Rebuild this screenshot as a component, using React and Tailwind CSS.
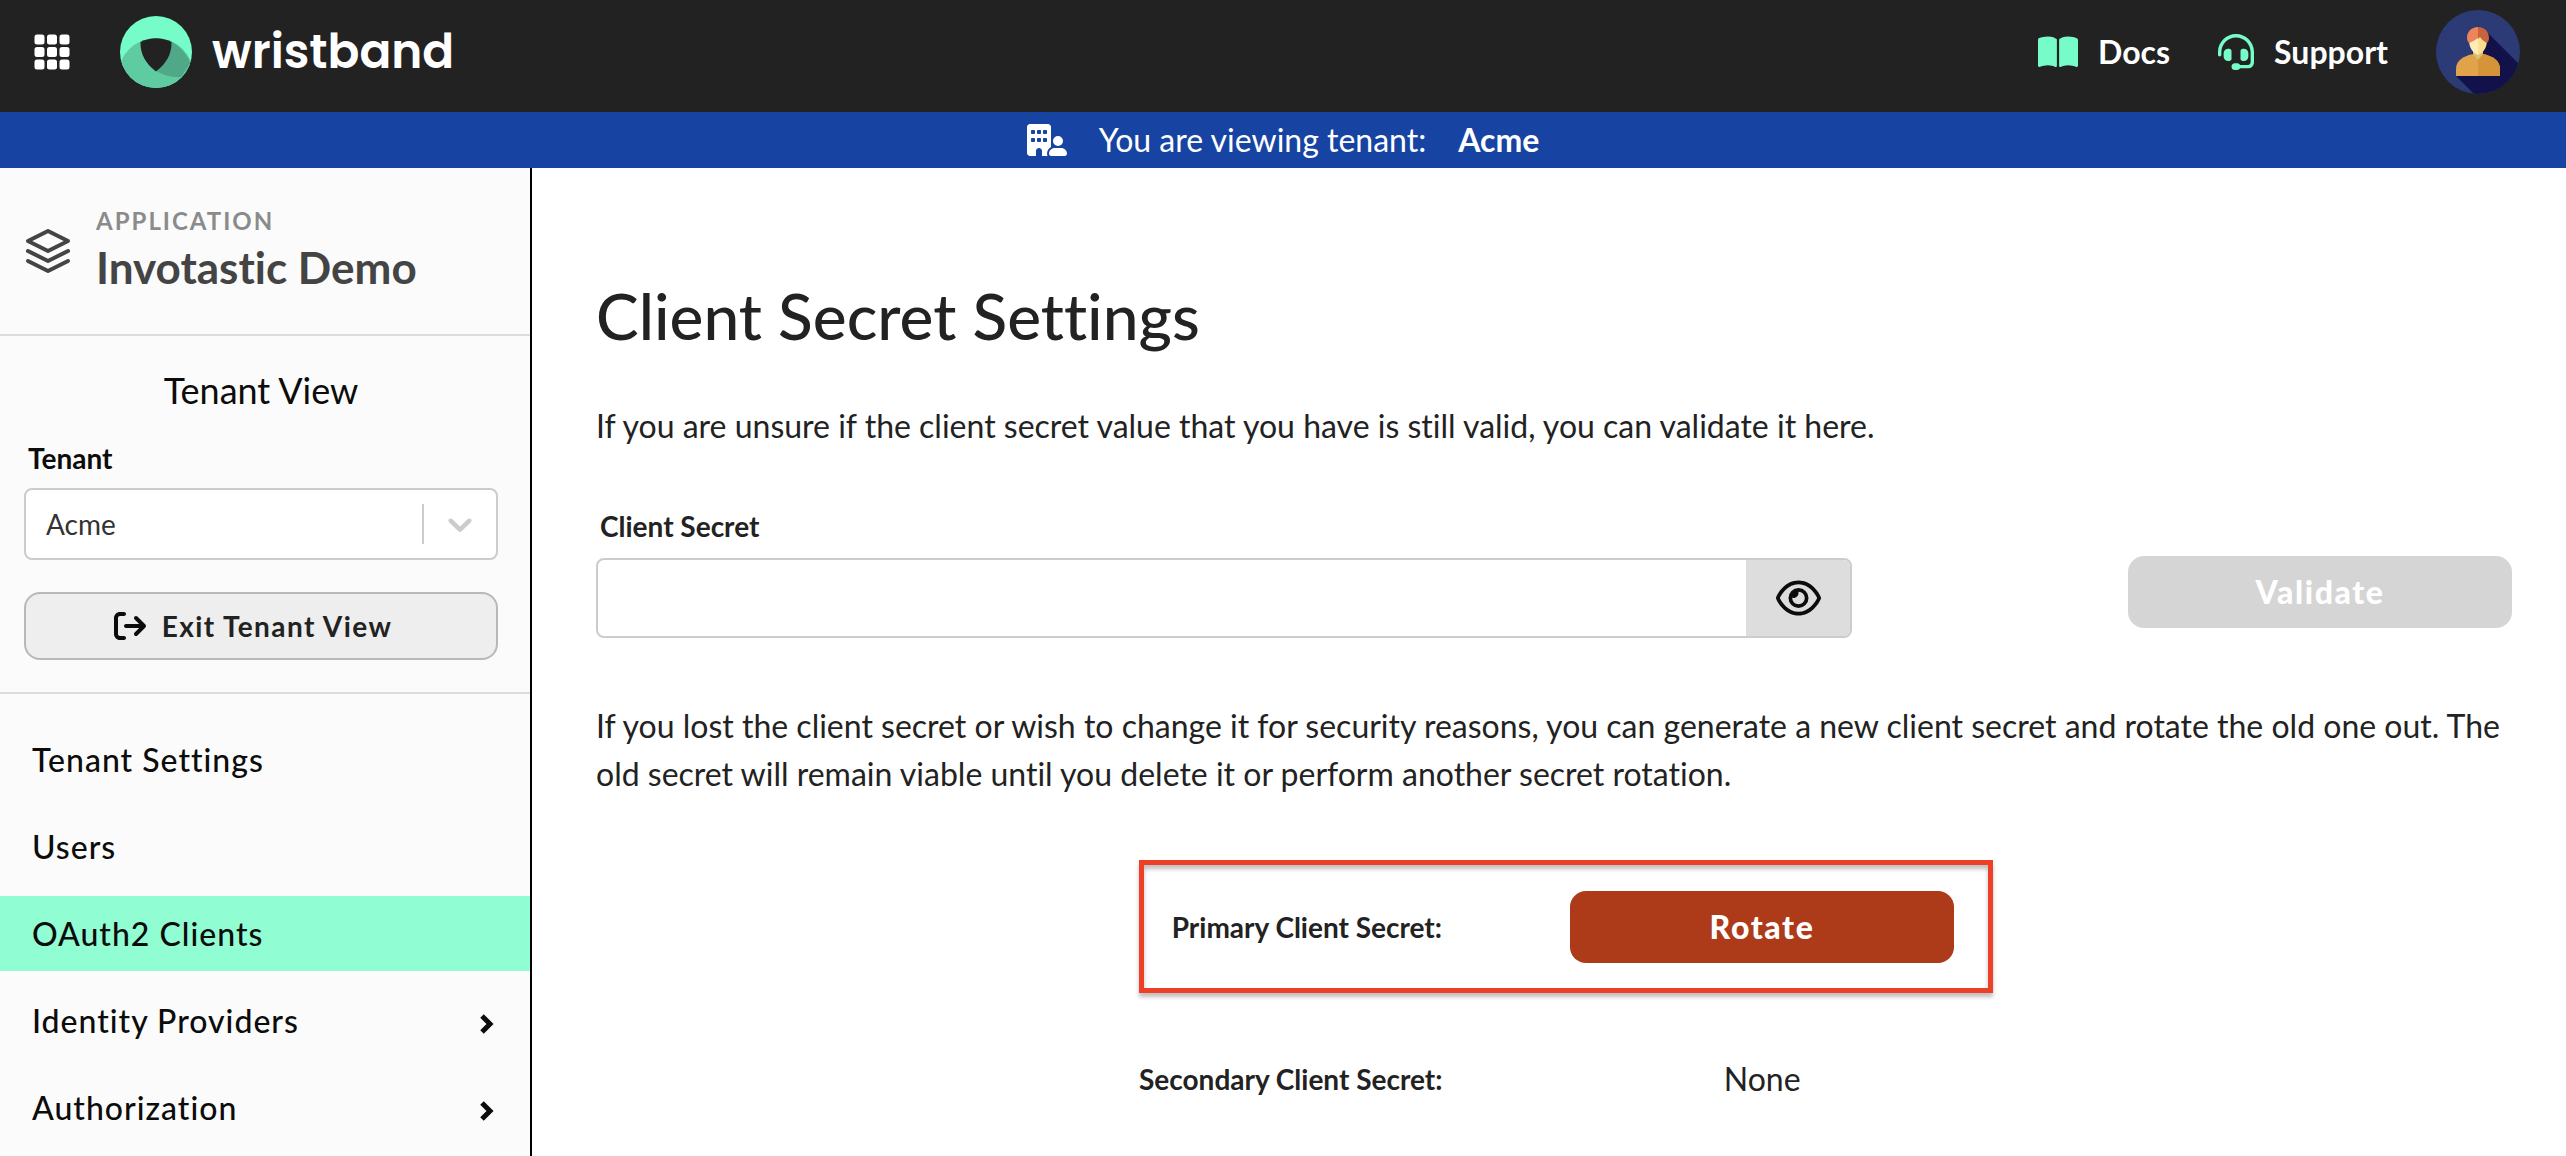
import React, { useState } from "react";
import {
  FaArrowRightFromBracket,
  FaBookOpen,
  FaBuildingUser,
  FaHeadset,
  FaRegEye,
} from "react-icons/fa6";
import { FiLayers } from "react-icons/fi";
import { BsGrid3X3GapFill } from "react-icons/bs";

function LogoMark() {
  return (
    <svg viewBox="0 0 72 72" className="size-18" aria-hidden="true">
      <defs>
        <clipPath id="logo-disc">
          <circle cx="36" cy="36" r="36" />
        </clipPath>
      </defs>
      <g clipPath="url(#logo-disc)">
        <rect width="72" height="72" fill="#75fcc8" />
        <circle cx="36" cy="60" r="38" fill="#5fcba1" />
        <path d="M51.500 25.500C59 29.500 66 37 70.500 47L61 61C51 61.500 43 59 36.500 55C46 48 52 38 51.500 25.500Z" fill="#4fa887" />
        <path d="M20.500 26C30.500 21 41.500 21 51.500 26C52 38 46 48 36 55.500C26 48 20 38 20.500 26Z" fill="#222222" />
      </g>
    </svg>
  );
}

function Avatar() {
  return (
    <svg viewBox="0 0 84 84" className="size-21" aria-hidden="true">
      <defs>
        <clipPath id="avatar-disc">
          <circle cx="42" cy="42" r="42" />
        </clipPath>
      </defs>
      <g clipPath="url(#avatar-disc)">
        <rect width="84" height="84" fill="#2c3b75" />
        <path d="M51 22L84 55V84H38L20 66Z" fill="#121149" />
        <path d="M20 66V59C20 50 28 46 37 44H47C56 46 64 50 64 59V66Z" fill="#e0a34a" />
        <path d="M42 44H47C56 46 64 50 64 59V66H42Z" fill="#d59438" />
        <path d="M37 38H47V44L42 50L37 44Z" fill="#ddc06d" />
        <path d="M33 30L42 24V45C37 43 33 38 33 30Z" fill="#fdebb9" />
        <path d="M42 24L51 30C51 38 47 43 42 45Z" fill="#fbdf8f" />
        <path d="M42 17C35 17 31 22 31 28C31 30 32 32 33 33C37 31 40 30 42 28Z" fill="#ee8459" />
        <path d="M42 17C49 17 53 22 53 28C53 30 52 32 51 33C48 31 46 30 44 27L42 29Z" fill="#c8633d" />
      </g>
    </svg>
  );
}

function SelectChevron() {
  return (
    <svg viewBox="0 0 20 20" className="size-10" fill="currentColor" aria-hidden="true">
      <path d="M4.516 7.548c0.436-0.446 1.043-0.481 1.576 0l3.908 3.747 3.908-3.747c0.533-0.481 1.141-0.446 1.574 0 0.436 0.445 0.408 1.197 0 1.615-0.406 0.418-4.695 4.502-4.695 4.502-0.217 0.223-0.502 0.335-0.787 0.335s-0.57-0.112-0.789-0.335c0 0-4.287-4.084-4.695-4.502s-0.436-1.17 0-1.615z" />
    </svg>
  );
}

function NavChevron() {
  return (
    <svg viewBox="0 0 14 20" className="mt-1.5 h-5 w-3.5" fill="none" aria-hidden="true">
      <path d="M2 2L10 10L2 18" stroke="currentColor" strokeWidth="5" />
    </svg>
  );
}

function TopBar() {
  return (
    <header className="flex h-28 items-center justify-between bg-[#222222] pr-[46px] pb-2 pl-8 text-white">
      <div className="flex items-center gap-12">
        <button type="button" aria-label="Applications">
          <BsGrid3X3GapFill className="size-10" />
        </button>
        <a href="#home" className="flex items-center gap-5">
          <LogoMark />
          <span className="font-[Poppins,Inter,sans-serif] text-[47px] font-semibold">wristband</span>
        </a>
      </div>
      <nav className="flex items-center gap-12 text-[32px] font-bold">
        <a href="#docs" className="flex items-center gap-5">
          <FaBookOpen className="h-9 w-10 text-[#75fcc8]" />
          Docs
        </a>
        <a href="#support" className="flex items-center gap-5">
          <FaHeadset className="size-9 text-[#75fcc8]" />
          Support
        </a>
        <button type="button" aria-label="Account">
          <Avatar />
        </button>
      </nav>
    </header>
  );
}

function TenantBanner() {
  return (
    <div className="flex h-14 items-center justify-center bg-[#1744a3] text-[32px] text-white">
      <FaBuildingUser className="mr-8 h-8 w-10" />
      <span className="mr-8">You are viewing tenant:</span>
      <strong>Acme</strong>
    </div>
  );
}

const navItems = [
  { label: "Tenant Settings" },
  { label: "Users" },
  { label: "OAuth2 Clients", active: true },
  { label: "Identity Providers", nested: true },
  { label: "Authorization", nested: true },
];

function Sidebar() {
  return (
    <aside className="w-[532px] shrink-0 border-r-2 border-black bg-[#fbfbfb] text-[#0c0c0c]">
      <div className="flex h-42 items-center gap-6 border-b-2 border-[#dcdcdc] px-6 text-[#444444]">
        <FiLayers className="size-12" />
        <div>
          <div className="text-2xl leading-8 font-bold tracking-[2px] text-[#8b8b8b]">APPLICATION</div>
          <div className="text-[44px] leading-15 font-bold">Invotastic Demo</div>
        </div>
      </div>

      <div className="border-b-2 border-[#dcdcdc] pt-[30px] pr-8 pb-8 pl-6">
        <h2 className="text-center text-4xl leading-12">Tenant View</h2>
        <label htmlFor="tenant" className="mt-6 ml-1 block text-[28px] leading-10 font-bold">
          Tenant
        </label>
        <div className="relative mt-[10px]">
          <select
            id="tenant"
            className="block h-18 w-full appearance-none rounded-lg border-2 border-[#cccccc] bg-white px-5 text-[28px] text-[#333333]"
          >
            <option>Acme</option>
          </select>
          <div className="pointer-events-none absolute inset-y-4 right-0.5 flex items-center border-l-2 border-[#cccccc] px-4 text-[#cccccc]">
            <SelectChevron />
          </div>
        </div>
        <button
          type="button"
          className="mt-8 flex h-17 w-full items-center justify-center gap-4 rounded-2xl border-2 border-[#b8b8b8] bg-[#eeeeee] pr-4 text-[28px] font-bold tracking-wider text-[#222222]"
        >
          <FaArrowRightFromBracket className="size-8 text-[#0c0c0c]" />
          Exit Tenant View
        </button>
      </div>

      <nav className="flex flex-col gap-3 pt-7">
        {navItems.map((item) => (
          <a
            key={item.label}
            href="#nav"
            aria-current={item.active ? "page" : undefined}
            className={
              item.active
                ? "flex h-[75px] items-center justify-between bg-[#90fdd3] pr-9 pl-8 text-[32px] font-medium tracking-[1px]"
                : "flex h-[75px] items-center justify-between pr-9 pl-8 text-[32px] font-medium tracking-[1px]"
            }
          >
            {item.label}
            {item.nested && <NavChevron />}
          </a>
        ))}
      </nav>
    </aside>
  );
}

function ClientSecretSettings() {
  const [secret, setSecret] = useState("");
  const [visible, setVisible] = useState(false);
  return (
    <main className="min-w-0 flex-1 bg-white pt-27 pr-[54px] pl-16 text-[#222222]">
      <h1 className="text-[64px] leading-20 font-medium">Client Secret Settings</h1>
      <p className="mt-[46px] text-[32px] leading-12">
        If you are unsure if the client secret value that you have is still valid, you can validate it here.
      </p>

      <form className="mt-14 flex items-end justify-between">
        <div className="w-[1256px]">
          <label htmlFor="client-secret" className="ml-1 block text-[28px] leading-10 font-bold">
            Client Secret
          </label>
          <div className="mt-3 flex h-20 overflow-hidden rounded-lg border-2 border-[#cccccc]">
            <input
              id="client-secret"
              type={visible ? "text" : "password"}
              value={secret}
              onChange={(event) => setSecret(event.target.value)}
              className="min-w-0 flex-1 px-5 text-[32px] outline-none"
            />
            <button
              type="button"
              aria-label="Show client secret"
              onClick={() => setVisible(!visible)}
              className="flex w-26 items-center justify-center bg-[#dddddd] text-[#0c0c0c]"
            >
              <FaRegEye className="h-10 w-[45px]" />
            </button>
          </div>
        </div>
        <button
          type="button"
          disabled
          className="mb-[10px] h-18 w-96 rounded-2xl bg-[#d5d5d5] text-[32px] font-black tracking-wider text-white"
        >
          Validate
        </button>
      </form>

      <p className="mt-16 text-[32px] leading-12">
        If you lost the client secret or wish to change it for security reasons, you can generate a new client secret
        and rotate the old one out. The old secret will remain viable until you delete it or perform another secret
        rotation.
      </p>

      <div className="mt-[62px] flex flex-col items-center gap-[62px] pl-6">
        <div className="flex h-[133px] w-[854px] items-center justify-end gap-32 border-5 border-[#ee4026] pr-[34px] shadow-[0_4px_4px_rgba(0,0,0,0.25),inset_0_4px_4px_rgba(0,0,0,0.25)]">
          <span className="text-[28px] font-bold whitespace-nowrap">Primary Client Secret:</span>
          <button
            type="button"
            className="h-18 w-96 rounded-2xl bg-[#ad3a19] text-[32px] font-black tracking-wider text-white"
          >
            Rotate
          </button>
        </div>
        <div className="flex w-[854px] items-center justify-end gap-32 pr-[39px]">
          <span className="text-[28px] font-bold whitespace-nowrap">Secondary Client Secret:</span>
          <span className="w-96 text-center text-[32px] leading-12">None</span>
        </div>
      </div>
    </main>
  );
}

export default function App() {
  return (
    <div className="flex min-h-screen flex-col font-[Lato,sans-serif] [font-variant-ligatures:none]">
      <TopBar />
      <TenantBanner />
      <div className="flex flex-1">
        <Sidebar />
        <ClientSecretSettings />
      </div>
    </div>
  );
}
